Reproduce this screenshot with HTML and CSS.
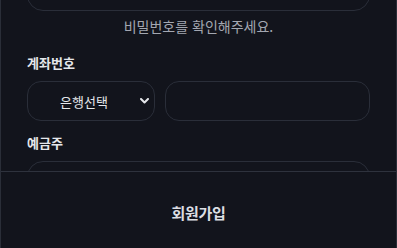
FILE: index.html
```html
<!DOCTYPE html>
<html lang="ko">
<head>
<meta charset="utf-8">
<link rel="stylesheet" href="styles.css">
</head>
<body>
<div class="frame">
  <div class="content">
    <div class="field field-top"></div>
    <p class="helper">비밀번호를 확인해주세요.</p>
    <label class="label label-account">계좌번호</label>
    <div class="row">
      <div class="field select">
        <span class="select-text">은행선택</span>
        <svg class="chev" width="9" height="6" viewBox="0 0 9 6"><path d="M1 1l3.5 3.5L8 1" fill="none" stroke="#e5e7eb" stroke-width="2" stroke-linecap="round" stroke-linejoin="round"/></svg>
      </div>
      <div class="field account"></div>
    </div>
    <label class="label label-holder">예금주</label>
    <div class="field"></div>
  </div>
  <div class="footer">
    <button class="submit">회원가입</button>
  </div>
</div>
</body>
</html>
```
FILE: styles.css
```css
* { box-sizing: border-box; }
html, body {
  margin: 0;
  padding: 0;
  height: 100%;
  background: #12141c;
  overflow: hidden;
}
body {
  font-family: "Noto Sans CJK KR", "Noto Sans", sans-serif;
  color: #e5e7eb;
}
.frame {
  position: relative;
  height: 248px;
  border-left: 1px solid #2a2e38;
  border-right: 1px solid #2a2e38;
  overflow: hidden;
}
.content {
  display: flex;
  flex-direction: column;
  padding: 0 26px;
  margin-top: -30px;
}
.field {
  height: 41px;
  border: 1px solid #2a2e39;
  border-radius: 16px;
  background: #12141c;
}
.helper {
  margin: 5px 0 0;
  font-size: 14px;
  line-height: 20px;
  text-align: center;
  color: #a3a7b1;
}
.label {
  font-size: 13px;
  font-weight: 700;
  line-height: 20px;
  color: #e5e7eb;
}
.label-account { margin-top: 17px; }
.label-holder { margin-top: 12px; }
.row {
  display: flex;
  gap: 10px;
  margin-top: 8px;
}
.label + .field { margin-top: 8px; }
.select {
  width: 128px;
  height: 40px;
  border-radius: 14px;
  display: flex;
  align-items: center;
  padding: 0 5px 0 0;
}
.select-text {
  flex: 1;
  text-align: center;
  font-size: 13px;
  color: #e5e7eb;
}
.chev { flex: none; }
.account {
  flex: 1;
  height: 40px;
  border-radius: 14px;
}
.footer {
  position: absolute;
  left: 0;
  right: 0;
  bottom: 0;
  height: 77px;
  border-top: 1px solid #2e323d;
  background: #12141c;
  display: flex;
  align-items: center;
  justify-content: center;
}
.submit {
  background: none;
  border: none;
  font-family: inherit;
  font-size: 15px;
  font-weight: 700;
  letter-spacing: -0.3px;
  color: #dcdee3;
  padding: 0;
  margin-top: 4px;
}
```
